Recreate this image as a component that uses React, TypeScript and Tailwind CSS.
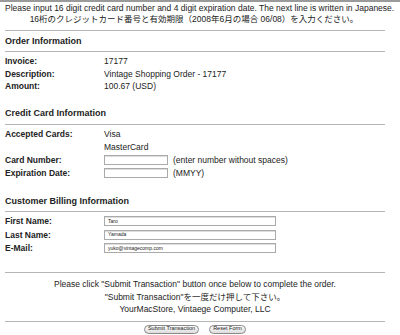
export default function App() {
  const font = { fontFamily: '"Liberation Sans", "Noto Sans CJK JP", sans-serif' };
  return (
    <div className="w-[400px] h-[335px] bg-white overflow-hidden border-t-2 border-[#9a9a9a] text-[8.5px] leading-none text-[#222]" style={font}>
      <div className="px-[5px] pt-[1px]">
        <p className="h-[10px] flex items-center whitespace-nowrap">Please input 16 digit credit card number and 4 digit expiration date. The next line is written in Japanese.</p>
        <p className="h-[10px] mt-[1px] flex items-center justify-center pr-[12px] whitespace-nowrap">16桁のクレジットカード番号と有効期限（2008年6月の場合 06/08）を入力ください。</p>
      </div>

      <div className="mx-[5px] mr-[15px] mt-[6px] border-t border-[#b5b5b5]">
        <Heading title="Order Information" />
        <div className="pt-[3px]">
          <Row h="h-[12.5px]" label="Invoice:">17177</Row>
          <Row h="h-[12.5px]" label="Description:">Vintage Shopping Order - 17177</Row>
          <Row h="h-[12.5px]" label="Amount:">100.67 (USD)</Row>
        </div>
      </div>

      <div className="mx-[5px] mr-[15px] mt-[11px]">
        <Heading title="Credit Card Information" />
        <div className="pt-[3px]">
          <Row h="h-[13px]" label="Accepted Cards:">Visa</Row>
          <Row h="h-[13px]" label="">MasterCard</Row>
          <Row h="h-[13px]" label="Card Number:">
            <Field w="w-[64px]" /> <span className="ml-[5px]">(enter number without spaces)</span>
          </Row>
          <Row h="h-[13px]" label="Expiration Date:">
            <Field w="w-[64px]" /> <span className="ml-[5px]">(MMYY)</span>
          </Row>
        </div>
      </div>

      <div className="mx-[5px] mr-[15px] mt-[12px]">
        <Heading title="Customer Billing Information" pb="pb-[4px]" />
        <div className="pt-[3px]">
          <Row h="h-[13.5px]" label="First Name:"><Field w="w-[172px]" value="Taro" /></Row>
          <Row h="h-[13.5px]" label="Last Name:"><Field w="w-[172px]" value="Yamada" /></Row>
          <Row h="h-[13.5px]" label="E-Mail:"><Field w="w-[172px]" value="yuko@vintagecomp.com" /></Row>
        </div>
      </div>

      <div className="mx-[5px] mr-[15px] mt-[17px] border-t border-[#b5b5b5] pt-[5px] pb-[5px] text-center">
        <p className="h-[12.5px] flex items-center justify-center">Please click "Submit Transaction" button once below to complete the order.</p>
        <p className="h-[12.5px] flex items-center justify-center">"Submit Transaction"を一度だけ押して下さい。</p>
        <p className="h-[12.5px] flex items-center justify-center">YourMacStore, Vintaege Computer, LLC</p>
      </div>
      <div className="mx-[5px] mr-[15px] border-t border-[#b5b5b5] pt-[3px] flex justify-center gap-[10px]">
        <button className="h-[9px] w-[55px] rounded-full border border-[#8a8a8a] bg-gradient-to-b from-white to-[#dcdcdc] text-[5.5px] leading-none text-[#222]">Submit Transaction</button>
        <button className="h-[9px] w-[37px] rounded-full border border-[#8a8a8a] bg-gradient-to-b from-white to-[#dcdcdc] text-[5.5px] leading-none text-[#222]">Reset Form</button>
      </div>
    </div>
  );
}

function Heading({ title, pb = 'pb-[5px]' }: { title: string; pb?: string }) {
  return (
    <div className={`pt-[5px] ${pb} border-b border-[#b5b5b5]`}>
      <div className="h-[10px] flex items-center font-bold text-[9px]">{title}</div>
    </div>
  );
}

function Row({ label, h, children }: { label: string; h: string; children: React.ReactNode }) {
  return (
    <div className={`flex items-center ${h}`}>
      <div className="w-[99px] shrink-0 font-bold">{label}</div>
      <div className="flex items-center">{children}</div>
    </div>
  );
}

function Field({ w, value = '' }: { w: string; value?: string }) {
  return (
    <div className={`${w} h-[10px] border border-[#aaa] bg-white shadow-[inset_0_1px_0_#ddd] text-[5px] pl-[3px] flex items-center`}>{value}</div>
  );
}
